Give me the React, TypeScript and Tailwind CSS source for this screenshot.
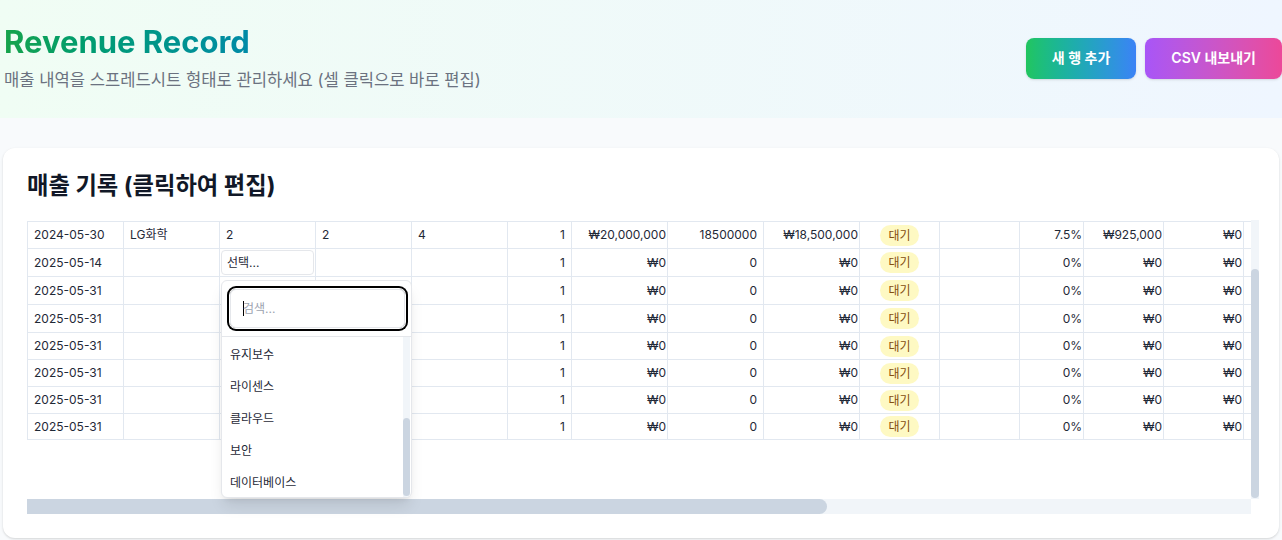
import React from "react";

const font = { fontFamily: "Inter, 'Noto Sans CJK KR', sans-serif" };

type Cell = string;
const colWidths = [96, 96, 96, 96, 96, 64, 96, 96, 96, 80, 80, 64, 80, 80, 96, 96, 80, 96, 96, 96, 80];
// l = left, r = right (normal padding), t = right (tight padding), c = center
const align = ["l", "l", "l", "l", "l", "r", "t", "r", "t", "c", "l", "t", "t", "t", "l", "l", "l", "l", "l", "l", "l"];
const rowHeights = ["h-[27px]", "h-[28px]", "h-[28px]", "h-[28px]", "h-[27px]", "h-[27px]", "h-[27px]", "h-[26px]"];

const rows: Cell[][] = [
  ["2024-05-30", "LG화학", "2", "2", "4", "1", "₩20,000,000", "18500000", "₩18,500,000", "대기", "", "7.5%", "₩925,000", "₩0"],
  ["2025-05-14", "", "__select", "", "", "1", "₩0", "0", "₩0", "대기", "", "0%", "₩0", "₩0"],
  ...Array.from({ length: 6 }, () => ["2025-05-31", "", "", "", "", "1", "₩0", "0", "₩0", "대기", "", "0%", "₩0", "₩0"]),
];

const options = ["유지보수", "라이센스", "클라우드", "보안", "데이터베이스"];

function CellContent({ v, i }: { v: string; i: number }) {
  if (v === "__select") {
    return (
      <div className="h-[25px] w-full rounded border border-[#e5e7eb] bg-white px-[5px] text-left leading-[23px] text-[#1f2937]">
        선택...
      </div>
    );
  }
  if (i === 9 && v) {
    return (
      <span className="inline-block rounded-full bg-[#fef9c3] px-2 py-[2px] align-middle text-xs leading-[17px] text-[#854d0e]">
        {v}
      </span>
    );
  }
  return <>{v}</>;
}

function cellClass(a: string, isSel: boolean, h: string) {
  const base = `${h} border border-[#e2e8f0] leading-4 whitespace-nowrap py-0`;
  if (isSel) return `${base} px-[1px] text-left`;
  if (a === "r") return `${base} pl-[6px] pr-[6px] text-right`;
  if (a === "t") return `${base} pl-[2px] pr-[1px] text-right`;
  if (a === "c") return `${base} px-[6px] text-center`;
  return `${base} pl-[6px] pr-[6px] text-left`;
}

export default function App() {
  const totalWidth = colWidths.reduce((a, b) => a + b, 0);
  return (
    <div className="min-h-[540px] bg-[#f8fafc]" style={font}>
      <header className="flex items-center justify-between bg-gradient-to-r from-[#f0fdf4] to-[#eff6ff] pb-[26px] pl-[4px] pt-6">
        <div>
          <h1 className="bg-gradient-to-r from-[#16a34a] to-[#2563eb] bg-clip-text text-[31px] font-bold leading-9 text-transparent">
            Revenue Record
          </h1>
          <p className="mt-2 text-[16.6px] leading-6 text-[#6b7280]">매출 내역을 스프레드시트 형태로 관리하세요 (셀 클릭으로 바로 편집)</p>
        </div>
        <div className="flex gap-[9px]">
          <button className="h-[41px] rounded-lg bg-gradient-to-r from-[#22c55e] to-[#3b82f6] px-[26px] text-sm font-semibold text-white shadow-sm">
            새 행 추가
          </button>
          <button className="h-[41px] rounded-lg bg-gradient-to-r from-[#a855f7] to-[#ec4899] px-[26px] text-sm font-semibold text-white shadow-sm">
            CSV 내보내기
          </button>
        </div>
      </header>

      <main className="px-[3px] pt-[30px]">
        <section className="rounded-xl bg-white pb-6 pl-6 pr-5 pt-6 shadow-[0_1px_3px_rgba(0,0,0,0.1),0_1px_2px_rgba(0,0,0,0.06)]">
          <h2 className="mb-5 text-[23.3px] font-bold leading-7 text-[#111827]">매출 기록 (클릭하여 편집)</h2>

          <div className="relative">
            <div className="flex h-[279px]">
              <div className="flex-1 overflow-hidden pt-px">
                <table className="table-fixed border-collapse text-xs text-[#1f2937]" style={{ width: totalWidth }}>
                  <colgroup>
                    {colWidths.map((w, i) => (
                      <col key={i} style={{ width: w }} />
                    ))}
                  </colgroup>
                  <tbody>
                    {rows.map((r, ri) => (
                      <tr key={ri} className={rowHeights[ri]}>
                        {colWidths.map((_, ci) => {
                          const v = r[ci] ?? "";
                          return (
                            <td key={ci} className={cellClass(align[ci], v === "__select", rowHeights[ri])}>
                              <CellContent v={v} i={ci} />
                            </td>
                          );
                        })}
                      </tr>
                    ))}
                  </tbody>
                </table>
              </div>
              <div className="flex w-[8px] flex-col bg-[#f1f5f9]">
                <div className="h-[49px]" />
                <div className="h-[229px] rounded-full bg-[#cbd5e1]" />
              </div>
            </div>
            <div className="flex h-[15px]">
              <div className="flex flex-1 bg-[#f1f5f9]">
                <div className="w-[800px] rounded-r-full rounded-l-sm bg-[#cbd5e1]" />
              </div>
              <div className="w-[8px] bg-white" />
            </div>

            {/* dropdown popup */}
            <div className="absolute left-[194px] top-[60px] w-[191px] overflow-hidden rounded-md border border-[#e5e7eb] bg-white shadow-lg">
              <div className="border-b border-[#e5e7eb] py-2 pl-2 pr-[6px]">
                <div className="flex h-[39px] items-center rounded-md border border-[#e5e7eb] px-3 text-xs ring-2 ring-black ring-offset-1">
                  <span className="mr-[-1px] inline-block h-[15px] w-px bg-black" />
                  <span className="text-[#9ca3af]">검색...</span>
                </div>
              </div>
              <div className="flex h-[160px]">
                <div className="flex-1 overflow-hidden pt-[2px]">
                  {options.map((o) => (
                    <div key={o} className="h-8 px-2 text-xs leading-8 text-[#1f2937]">
                      {o}
                    </div>
                  ))}
                </div>
                <div className="flex w-[7px] flex-col bg-[#f1f5f9]">
                  <div className="h-[81px]" />
                  <div className="h-[78px] rounded-full bg-[#cbd5e1]" />
                </div>
                <div className="w-px" />
              </div>
            </div>
          </div>
        </section>
      </main>
    </div>
  );
}
